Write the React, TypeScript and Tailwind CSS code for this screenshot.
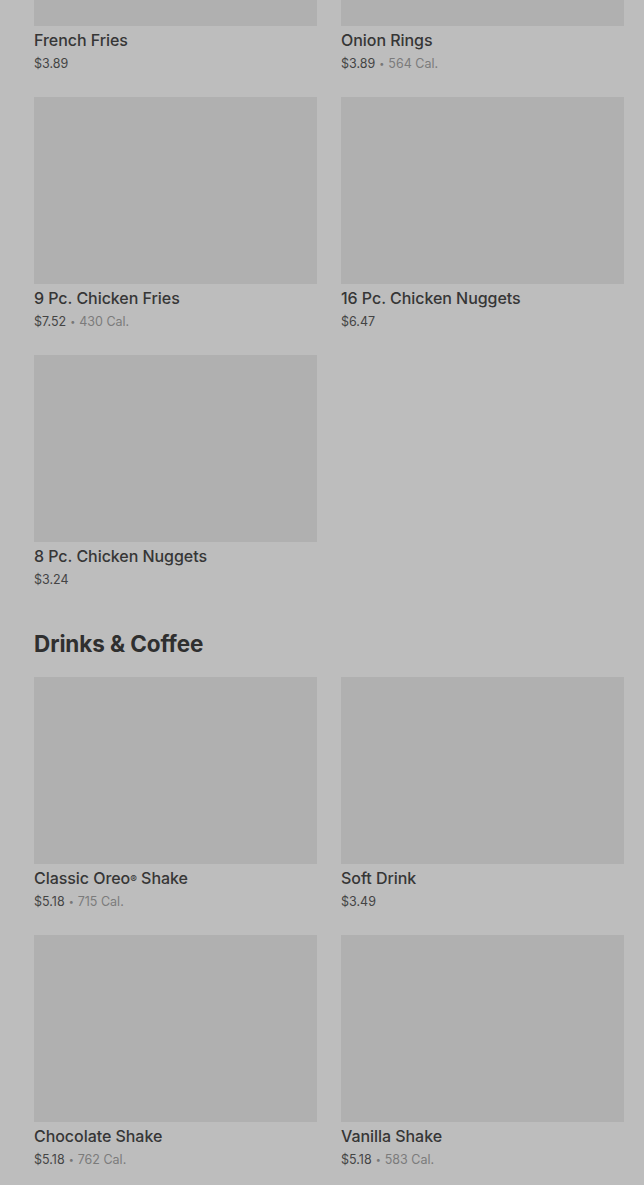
import React from "react";

type Item = { name: React.ReactNode; price: string; cal?: string };

const rows: Item[][] = [
  [
    { name: "French Fries", price: "$3.89" },
    { name: "Onion Rings", price: "$3.89", cal: "564 Cal." },
  ],
  [
    { name: "9 Pc. Chicken Fries", price: "$7.52", cal: "430 Cal." },
    { name: "16 Pc. Chicken Nuggets", price: "$6.47" },
  ],
  [{ name: "8 Pc. Chicken Nuggets", price: "$3.24" }],
];

const drinks: Item[][] = [
  [
    {
      name: (
        <>
          Classic Oreo<sup className="text-[10px] relative -top-[1px]">®</sup> Shake
        </>
      ),
      price: "$5.18",
      cal: "715 Cal.",
    },
    { name: "Soft Drink", price: "$3.49" },
  ],
  [
    { name: "Chocolate Shake", price: "$5.18", cal: "762 Cal." },
    { name: "Vanilla Shake", price: "$5.18", cal: "583 Cal." },
  ],
];

function Card({ item }: { item: Item }) {
  return (
    <div className="flex flex-col">
      <div className="h-[187px] bg-[#b0b0b0]" />
      <div className="mt-[4px] text-[16px] leading-[20px] font-medium text-[#363636] tracking-[-0.05px]">
        {item.name}
      </div>
      <div className="mt-[5px] text-[12.5px] leading-[17px] text-[#444] flex items-center">
        <span>{item.price}</span>
        {item.cal && (
          <>
            <span className="mx-[4px] text-[9px] text-[#777]">•</span>
            <span className="text-[#7b7b7b]">{item.cal}</span>
          </>
        )}
      </div>
    </div>
  );
}

function Grid({ rows }: { rows: Item[][] }) {
  return (
    <div className="grid grid-cols-2 gap-x-[24px] gap-y-[25px]">
      {rows.flatMap((r, i) => r.map((it, j) => <Card key={`${i}-${j}`} item={it} />))}
    </div>
  );
}

export default function App() {
  return (
    <div
      className="w-[644px] h-[1185px] overflow-hidden bg-[#bdbdbd]"
      style={{ fontFamily: "Inter, 'Noto Sans', sans-serif" }}
    >
      <div className="-mt-[161px] pl-[34px] pr-[20px]">
        <Grid rows={rows} />
        <h2 className="mt-[42px] text-[22.5px] leading-[28px] font-bold text-[#2f2f2f] tracking-[-0.1px]">
          Drinks &amp; Coffee
        </h2>
        <div className="mt-[19px]">
          <Grid rows={drinks} />
        </div>
      </div>
    </div>
  );
}
